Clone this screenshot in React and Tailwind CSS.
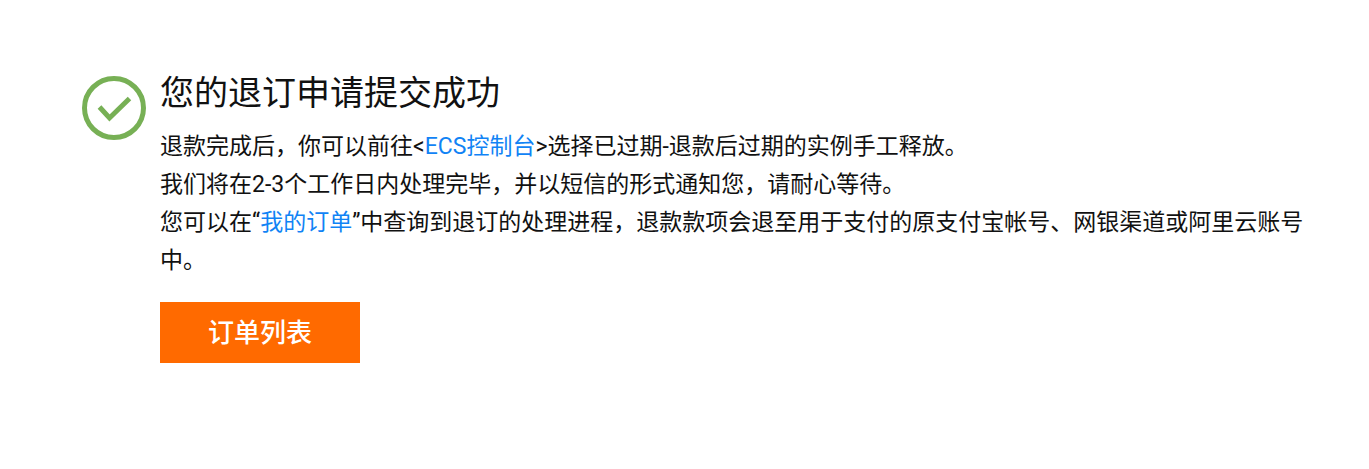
function SuccessIcon() {
  return (
    <svg className="mt-[3px] size-16 shrink-0" viewBox="0 0 64 64" fill="none" stroke="#77b055" aria-hidden="true">
      <circle cx="32" cy="32" r="29.5" strokeWidth="5" />
      <path d="M17.5 31 27.5 42 47.5 22.5" strokeWidth="5" />
    </svg>
  );
}

function TextLink({ href, children }) {
  return <a href={href} className="text-[#1183f5]">{children}</a>;
}

export default function App() {
  return (
    <main className="flex items-start gap-3.5 bg-white py-[73px] pr-16 pl-[82px] font-[Roboto,'Noto_Sans_CJK_SC',sans-serif] text-[#111]">
      <SuccessIcon />
      <section className="min-w-0 flex-1">
        <h1 className="text-[34px] leading-10">您的退订申请提交成功</h1>
        <div className="mt-[15px] text-[23px] leading-[38px]">
          <p>
            退款完成后，你可以前往&lt;<TextLink href="#ecs">ECS控制台</TextLink>&gt;选择已过期-退款后过期的实例手工释放。
          </p>
          <p>我们将在2-3个工作日内处理完毕，并以短信的形式通知您，请耐心等待。</p>
          <p>
            您可以在“<TextLink href="#orders">我的订单</TextLink>”中查询到退订的处理进程，退款款项会退至用于支付的原支付宝帐号、网银渠道或阿里云账号中。
          </p>
        </div>
        <button type="button" className="mt-[22px] bg-[#ff6a00] px-12 pt-3 pb-[11px] text-[26px] leading-[38px] font-medium text-white">
          订单列表
        </button>
      </section>
    </main>
  );
}
